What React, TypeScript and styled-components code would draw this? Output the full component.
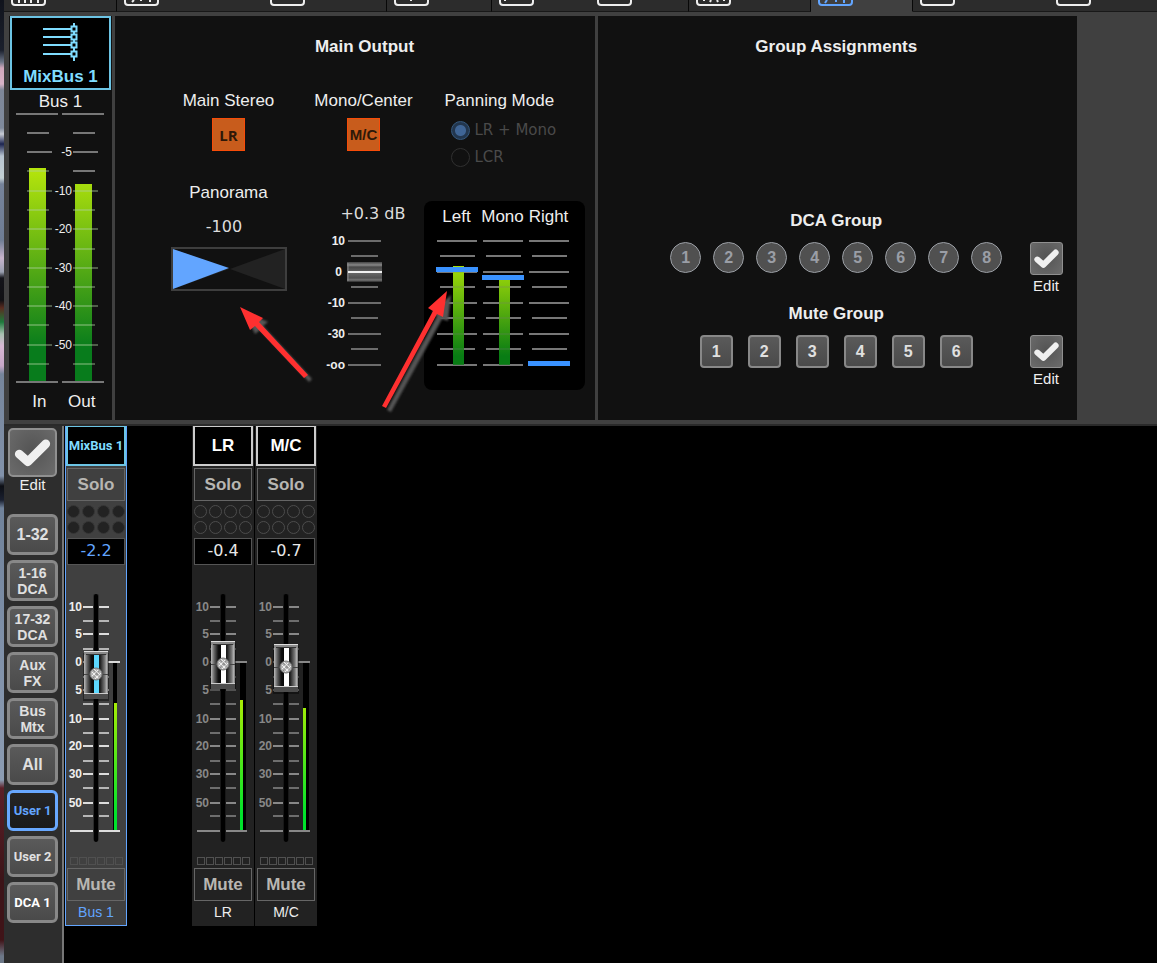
import React, { useState } from 'react';
import styled, { createGlobalStyle, css } from 'styled-components';

const sans = '"Liberation Sans", Arial, sans-serif';
const narrow = 'Roboto, "Liberation Sans", sans-serif';
const digits = '"DejaVu Sans", Verdana, sans-serif';

const GlobalStyle = createGlobalStyle`
  *, *::before, *::after { box-sizing: border-box; }
  body {
    margin: 0;
    background: #000;
    color: #eee;
    font-family: ${sans};
    font-size: 17px;
    line-height: 20px;
  }
  button { margin: 0; padding: 0; font-family: inherit; cursor: pointer; }
  svg { display: block; }
`;

/* ---------- page frame ---------- */

const Page = styled.div`
  display: flex;
  min-height: 100vh;
`;

const Wallpaper = styled.div`
  flex: 0 0 4px;
  background: linear-gradient(
    #10131c 0, #1a1f2c 50px, #6d7688 62px, #d0a8bc 68px, #d8b4c8 84px, #7e8798 90px,
    #7f8a9c 128px, #c8ccd4 134px, #1c2450 144px, #b8c4d0 156px, #c4d0d4 178px, #76839a 184px,
    #6f7d94 240px, #c8b4cc 258px, #9aa0b0 272px, #14141a 278px, #101014 300px, #5a2c20 308px,
    #1e7a3c 322px, #a8c0b0 334px, #d8b8d4 346px, #c8a8c8 366px, #76859b 374px, #8292aa 476px,
    #0c0e14 486px, #1a2030 500px, #70829a 508px, #7f90a8 640px, #8c9cb2 780px, #5c2028 788px,
    #3c1418 880px, #401418 940px, #6d7888 956px
  );
`;

const Main = styled.main`
  flex: 1;
  min-width: 0;
  display: flex;
  flex-direction: column;
`;

/* ---------- tab bar ---------- */

const TabBar = styled.nav`
  display: flex;
  height: 12px;
  overflow: hidden;
  background: #2c2c2c;
`;

const Tab = styled.button<{ $width: number; $active?: boolean; $divided?: boolean }>`
  flex: 0 0 ${p => p.$width}px;
  display: flex;
  padding: 0 0 0 7px;
  border: 0;
  border-right: ${p => (p.$divided ? '1px solid #080808' : '0')};
  border-bottom: 1px solid ${p => (p.$active ? '#404040' : '#181818')};
  background: ${p => (p.$active ? '#404040' : '#2c2c2c')};
  color: ${p => (p.$active ? '#62a5ff' : '#eee')};
`;

const TabRest = styled.div`
  flex: 1;
  border-bottom: 1px solid #181818;
`;

const tabs = [
  { name: 'Mixer', width: 113, divided: true, marks: 'M8 0V3M14 0V3M20 0V3M27 0V3' },
  { name: 'Channel', width: 146, marks: 'M10 0L8 2M17 0V1M26 0V2' },
  { name: 'Config', width: 124, divided: true, marks: '' },
  { name: 'Gate', width: 105, divided: true, marks: 'M17 0V1' },
  { name: 'Dyn', width: 98, marks: 'M6 0V1' },
  { name: 'EQ', width: 99, divided: true, marks: '' },
  { name: 'Sends', width: 122, divided: true, marks: 'M8 0V1M15 0L14 2M21 0L22 2M28 0V1' },
  { name: 'Main', width: 102, active: true, divided: true, marks: 'M9 0L7 3M18 0V2M26 0V3' },
  { name: 'Effects', width: 136, marks: '' },
  { name: 'Meters', width: 60, marks: '' },
];

/* ---------- upper panels ---------- */

const Panels = styled.section`
  display: grid;
  grid-template-columns: 103px minmax(450px, 1fr) minmax(450px, 1fr);
  gap: 3px;
  padding: 4px 80px 4px 5px;
  background: #404040;
  border-bottom: 2px solid #2a2a2a;
`;

const Panel = styled.div`
  min-height: 404px;
  background: #111;
`;

const BusButton = styled.button`
  display: flex;
  flex-direction: column;
  align-items: center;
  justify-content: space-between;
  width: 101px;
  height: 74px;
  margin: 0 1px;
  padding: 4px 0 1px;
  border: 2px solid #6cc4e4;
  background: #000;
  color: #7fdcff;
  font-size: 17px;
  font-weight: bold;
  line-height: 20px;
`;

const CenterText = styled.div`
  text-align: center;
  white-space: nowrap;
`;

const BusName = styled(CenterText)`
  padding-top: 2px;
`;

const MeterNames = styled.div`
  display: grid;
  grid-template-columns: 1fr 1fr;
  padding: 0 9px;
  text-align: center;
`;

const Heading = styled.h2`
  margin: 0;
  font-size: 17px;
  line-height: 20px;
  font-weight: bold;
  text-align: center;
`;

const OutputBody = styled.div`
  position: relative;
  width: 440px;
  min-height: 404px;
  margin: 0 10px 0 auto;
  padding-top: 21px;
`;

const OutputColumns = styled.div`
  display: grid;
  grid-template-columns: 168px 102px 161px;
  column-gap: 0;
  margin-top: 34px;
`;

const Column = styled.div`
  display: flex;
  flex-direction: column;
  align-items: center;
`;

const PanningColumn = styled(Column)`
  width: 161px;
  margin-left: 9px;
`;

const Assign = styled.button<{ $face?: string }>`
  width: 33px;
  height: 33px;
  margin-top: 7px;
  border: 1px solid #f84c08;
  background: #c85c1c;
  color: #2e1808;
  font-family: ${p => p.$face || sans};
  font-size: 15px;
  font-weight: bold;
`;

const Readout = styled.output<{ $top: number; $align?: string }>`
  display: block;
  width: 100%;
  margin-top: ${p => p.$top}px;
  padding-right: 9px;
  color: #ddd;
  font-family: ${digits};
  font-size: 16px;
  line-height: 20px;
  text-align: ${p => p.$align || 'center'};
  white-space: nowrap;
`;

const PanLabel = styled.label`
  margin-top: 32px;
`;

const SliderFrame = styled.div`
  position: relative;
`;

const PanFrame = styled(SliderFrame)`
  width: 116px;
  height: 44px;
  margin-top: 10px;
`;

const RangeInput = styled.input<{ $vertical?: boolean }>`
  position: absolute;
  inset: 0;
  width: 100%;
  height: 100%;
  margin: 0;
  opacity: 0;
  cursor: pointer;
  ${p => p.$vertical && css`writing-mode: vertical-lr; direction: rtl;`}
`;

const PanningMode = styled.fieldset`
  width: 100%;
  margin: 0;
  padding: 0 0 0 21px;
  border: 0;
  white-space: nowrap;
`;

const Legend = styled.legend`
  padding: 0;
  margin-bottom: 9px;
`;

const RadioRow = styled.label`
  display: flex;
  align-items: center;
  gap: 5px;
  height: 20px;
  margin: 0 0 7px 6px;
  color: #4a4a4a;
  font-family: ${digits};
  font-size: 15px;
`;

const Radio = styled.input`
  appearance: none;
  width: 19px;
  height: 19px;
  margin: 0;
  border: 1px solid #303030;
  border-radius: 50%;
  &:checked {
    border-color: #35597f;
    background: radial-gradient(circle, #3f6596 0 5px, #22364e 6px);
  }
`;

const MeterBox = styled.div`
  display: flex;
  gap: 4px;
  width: 161px;
  height: 189px;
  margin-top: 27px;
  padding: 6px 0 0 12px;
  border-radius: 8px;
  background: #000;
`;

const MeterColumn = styled.div`
  display: flex;
  flex-direction: column;
  align-items: center;
  width: 42px;
  white-space: nowrap;
`;

const Annotation = styled.svg`
  position: absolute;
  top: 0;
  left: 0;
  pointer-events: none;
`;

const GroupPanel = styled(Panel)`
  padding: 21px 2px 0 0;
`;

const GroupSections = styled.div`
  display: grid;
  gap: 10px;
  margin-top: 154px;
`;

const GroupRow = styled.div`
  display: grid;
  grid-template-columns: 58px 1fr 58px;
  align-items: start;
  margin-top: 11px;
`;

const GroupButtons = styled.div<{ $gap: number }>`
  grid-column: 2;
  display: flex;
  justify-content: center;
  gap: ${p => p.$gap}px;
`;

const DcaButton = styled.button`
  width: 31px;
  height: 31px;
  border: 1px solid #9a9ea4;
  border-radius: 50%;
  background: #505050;
  color: #9a9ea6;
  font-size: 16px;
  font-weight: bold;
`;

const raised = css`
  border: 2px solid #888;
  border-radius: 4px;
  background: linear-gradient(#5a5a5a, #4a4a4a);
  color: #e0e0e0;
  font-weight: bold;
`;

const MuteGroupButton = styled.button`
  ${raised}
  width: 33px;
  height: 33px;
  font-size: 16px;
`;

const EditBox = styled.div`
  display: flex;
  flex-direction: column;
  align-items: center;
  color: #eee;
  font-size: 15px;
  line-height: 16px;
`;

const EditButton = styled.button<{ $large?: boolean }>`
  width: ${p => (p.$large ? 49 : 33)}px;
  height: ${p => (p.$large ? 49 : 33)}px;
  margin-bottom: ${p => (p.$large ? 0 : 3)}px;
  border: ${p => (p.$large ? 2 : 1)}px solid #909090;
  border-radius: ${p => (p.$large ? 5 : 3)}px;
  background: radial-gradient(ellipse at 50% 45%, #545454, #6c6c6c);
`;

/* ---------- lower mixer ---------- */

const Mixer = styled.section`
  flex: 1;
  display: flex;
  background: #000;
`;

const Sidebar = styled.aside`
  flex: 0 0 60px;
  padding: 2px 0 0 3px;
  border-right: 2px solid #777;
  background: #2d2d2d;
`;

const SideEdit = styled(EditBox)`
  width: 51px;
`;

const BankList = styled.div`
  display: grid;
  gap: 5px;
  width: 51px;
  margin-top: 21px;
`;

const Bank = styled.button<{ $kind?: 'stacked' | 'user'; $active?: boolean; $bright?: boolean }>`
  ${raised}
  height: 41px;
  border-width: 3px;
  border-radius: 6px;
  font-family: ${p => (p.$kind === 'user' ? narrow : sans)};
  font-size: ${p => (p.$kind === 'user' ? 13 : p.$kind ? 14 : 16)}px;
  line-height: 16px;
  white-space: pre;
  ${p => p.$bright && css`color: #fff;`}
  ${p => p.$active && css`
    border-color: #68a8ff;
    background: linear-gradient(#262626, #1a1a1a);
    color: #62a5ff;
  `}
`;

const Strips = styled.div`
  display: flex;
  align-items: flex-start;
  padding-left: 1px;
`;

const Strip = styled.article<{ $selected?: boolean }>`
  width: 62px;
  height: 500px;
  margin-right: ${p => (p.$selected ? 65 : 1)}px;
  border: 1px solid ${p => (p.$selected ? '#62a5ff' : '#222')};
  border-top: 0;
  background: ${p => (p.$selected ? '#404040' : '#222')};
  display: flex;
  flex-direction: column;
  align-items: center;
`;

const StripHead = styled.button<{ $selected?: boolean }>`
  width: 60px;
  height: 40px;
  border: 2px solid ${p => (p.$selected ? '#6cc4e4' : '#ccc')};
  border-top-width: 1px;
  background: #000;
  color: ${p => (p.$selected ? '#7fdcff' : '#fff')};
  font-family: ${p => (p.$selected ? narrow : sans)};
  font-size: ${p => (p.$selected ? 13 : 17)}px;
  font-weight: bold;
  white-space: nowrap;
`;

const StripButton = styled.button`
  width: 58px;
  height: 33px;
  border: 1px solid #666;
  background: transparent;
  color: #b8b6b2;
  font-size: 17px;
  font-weight: bold;
`;

const SoloButton = styled(StripButton)`
  margin: 2px 0 4px;
`;

const Dots = styled.div`
  display: grid;
  grid-template-columns: repeat(4, 13px);
  gap: 3px 2px;
`;

const Dot = styled.span<{ $filled?: boolean }>`
  width: 13px;
  height: 13px;
  border: 1px solid ${p => (p.$filled ? '#363636' : '#4c4c4c')};
  border-radius: 50%;
  background: ${p => (p.$filled ? '#222' : 'transparent')};
`;

const Level = styled.output<{ $selected?: boolean }>`
  width: 58px;
  height: 27px;
  margin-top: 4px;
  border: 1px solid #555;
  background: #000;
  color: ${p => (p.$selected ? '#62a5ff' : '#e8e8e8')};
  font-family: ${digits};
  font-size: 16px;
  line-height: 24px;
  text-align: center;
`;

const FaderSlot = styled.div`
  height: 290px;
`;

const Squares = styled.div`
  display: grid;
  grid-template-columns: repeat(6, 8px);
  gap: 1px;
  margin: 2px 0 3px;
`;

const Square = styled.span`
  height: 8px;
  border: 1px solid #505050;
`;

const StripName = styled.div<{ $selected?: boolean }>`
  margin-top: 1px;
  color: ${p => (p.$selected ? '#62a5ff' : '#eee')};
  font-size: 14px;
`;

/* ---------- drawings ---------- */

const BusIcon = () => (
  <svg width="40" height="40" viewBox="0 0 40 40" fill="none" stroke="#7fdcff" strokeWidth="2" aria-hidden="true">
    <path d="M2 7H31M2 15H31M2 23H31M2 32H31" />
    <path d="M33 1V4M33 10V12M33 18V20M33 26V29M33 35V39" />
    <path d="M30.500 4.500h5v5h-5zM30.500 12.500h5v5h-5zM30.500 20.500h5v5h-5zM30.500 29.500h5v5h-5z" />
  </svg>
);

const Check = ({ size }: { size: number }) => (
  <svg width={size} height={size} viewBox="2 2 44 44" fill="none" aria-hidden="true">
    <path d="M11 25.500L19.500 33L37 15.500" stroke="#f0f0f0" strokeWidth="8.500" strokeLinecap="round" strokeLinejoin="round" />
  </svg>
);

const LevelGradient = ({ id, top, bottom, range }: { id: string; top: string; bottom: string; range: [number, number] }) => (
  <defs>
    <linearGradient id={id} gradientUnits="userSpaceOnUse" x1="0" x2="0" y1={range[0]} y2={range[1]}>
      <stop offset="0" stopColor={top} />
      <stop offset="1" stopColor={bottom} />
    </linearGradient>
  </defs>
);

const meterMarks = [0, 19, 38, 57, 77, 96, 115, 135, 154, 173, 192, 211, 231, 250, 268];

const BusMeters = () => (
  <svg width="103" height="280" viewBox="0 0 103 280" role="img" aria-label="Bus input and output level">
    <LevelGradient id="bus" top="#b4e40c" bottom="#087c1c" range={[57, 235]} />
    {[{ x: 7, level: 56 }, { x: 53, level: 72 }].map(m => (
      <g key={m.x} transform={`translate(${m.x} 1)`}>
        <rect x="13" y={m.level - 1} width="17" height={269 - m.level} fill="url(#bus)" />
        {meterMarks.map((y, i) => {
          const end = i === 0 || i === 14;
          const over = y > m.level && !end;
          return (
            <React.Fragment key={y}>
              <rect x={end ? 0 : 11} y={y} width={end ? 42 : i % 2 ? 22 : 25} height="2" fill="#777" opacity={over ? 0 : 1} />
              {over && <rect x="11" y={y} width={i % 2 ? 22 : 25} height="2" fill="#b0d0a0" opacity="0.4" />}
            </React.Fragment>
          );
        })}
      </g>
    ))}
    <g fill="#eee" fontFamily="Liberation Sans" fontSize="12" textAnchor="end">
      {['-5', '-10', '-20', '-30', '-40', '-50'].map((t, i) => (
        <text key={t} x="63" y={[44, 83, 121, 160, 198, 237][i]}>{t}</text>
      ))}
    </g>
  </svg>
);

const outputMarks = [16, 31, 47, 62, 78, 93, 109, 124, 140];

const OutputMeter = ({ name, level, peak }: { name: string; level?: number; peak: number }) => (
  <MeterColumn>
    {name}
    <svg width="42" height="150" viewBox="0 1 42 150" role="img" aria-label={`${name} level`}>
      <LevelGradient id="output" top="#a4dc08" bottom="#087c14" range={[40, 130]} />
      {level && <rect x="17" y={level} width="11" height={139 - level} fill="url(#output)" />}
      {outputMarks.map((y, i) => (
        <rect key={y} x={i % 2 ? 4 : 1} y={y - 2} width={i % 2 ? 35 : 40} height="2" fill="#777" />
      ))}
      {level && <rect x="17" y={level} width="11" height={139 - level} fill="url(#output)" opacity="0.8" />}
      <rect y={peak} width="42" height="5" fill="#3a92ff" />
    </svg>
  </MeterColumn>
);

const Panorama = () => {
  const [pan, setPan] = useState(-100);
  return (
    <>
      <PanLabel htmlFor="panorama">Panorama</PanLabel>
      <Readout $top={14}>{pan}</Readout>
      <PanFrame>
        <svg width="116" height="44" viewBox="0 0 116 44" aria-hidden="true">
          <rect x="1" y="1" width="114" height="42" fill="#111" stroke="#3e3e3e" strokeWidth="2" />
          <path d="M114 2V42L59 22Z" fill="#222" />
          <path d="M2 2V42L58 22Z" fill="#222" />
          {pan < 0 && <path d="M2 2V42L58 21Z" fill="#62a5ff" opacity={-pan / 100} />}
          {pan > 0 && <path d="M114 2V42L58 21Z" fill="#62a5ff" opacity={pan / 100} />}
        </svg>
        <RangeInput id="panorama" type="range" min={-100} max={100} value={pan} onChange={e => setPan(+e.target.value)} />
      </PanFrame>
    </>
  );
};

const MonoSlider = () => {
  const [pos, setPos] = useState(93);
  const y = 141 - pos;
  return (
    <SliderFrame>
      <svg width="102" height="150" viewBox="0 0 102 150" aria-hidden="true">
        <defs>
          <linearGradient id="cap" x1="0" x2="0" y1="0" y2="1">
            <stop offset="0" stopColor="#444" />
            <stop offset="0.15" stopColor="#888" />
            <stop offset="0.25" stopColor="#484848" />
            <stop offset="0.55" stopColor="#666" />
            <stop offset="0.8" stopColor="#505050" />
            <stop offset="0.9" stopColor="#777" />
            <stop offset="1" stopColor="#2a2a2a" />
          </linearGradient>
        </defs>
        {outputMarks.map((m, i) => (
          <rect key={m} x={i % 2 ? 38 : 35} y={m} width={i % 2 ? 27 : 33} height="2" fill="#6c6c6c" />
        ))}
        <g fill="#eee" fontFamily="Liberation Sans" fontSize="12" fontWeight="bold" textAnchor="end">
          {['10', '0', '-10', '-30', '-oo'].map((t, i) => (
            <text key={t} x={i === 1 ? 29 : 32} y={[21, 52, 83, 114, 145][i]}>{t}</text>
          ))}
        </g>
        <rect x="34" y={y - 10} width="35" height="20" fill="url(#cap)" />
        <path d={`M35 ${y - 9}V${y + 9}`} stroke="#888" />
        <rect x="35" y={y - 1} width="34" height="2" fill="#f0f0f0" />
      </svg>
      <RangeInput $vertical type="range" aria-label="Mono/Center level" min={0} max={125} value={pos} onChange={e => setPos(+e.target.value)} />
    </SliderFrame>
  );
};

const faderMarks = [12, 26, 39, 54, 67, 82, 95, 109, 124, 138, 151, 166, 179, 193, 208, 221];
const faderLabels: [string, number][] = [
  ['10', 12], ['5', 39], ['0', 67], ['5', 95], ['10', 124], ['20', 151], ['30', 179], ['50', 208],
];

const Fader = ({ name, start, level, selected }: { name: string; start: number; level: number; selected?: boolean }) => {
  const [pos, setPos] = useState(start);
  const y = 236 - pos;
  const mark = selected ? '#ddd' : '#888';
  const id = `fader-${name.replace(/\W/g, '')}`;
  return (
    <SliderFrame>
      <svg width="60" height="280" viewBox="0 0 60 280" aria-hidden="true">
        <LevelGradient id={id} top="#c0ee00" bottom="#00e42c" range={[120, 250]} />
        <defs>
          <linearGradient id={`${id}-body`} x1="0" x2="1" y1="0" y2="0">
            <stop offset="0" stopColor="#bbb" />
            <stop offset="0.13" stopColor="#666" />
            <stop offset="0.3" stopColor="#111" />
            <stop offset="0.5" stopColor="#000" />
            <stop offset="0.68" stopColor="#222" />
            <stop offset="0.86" stopColor="#777" />
            <stop offset="0.96" stopColor="#bbb" />
            <stop offset="1" stopColor="#555" />
          </linearGradient>
        </defs>
        <g fill={mark}>
          {faderMarks.map((m, i) => (
            <React.Fragment key={m}>
              <rect x="17" y={m + 29} width="10" height="2" opacity={i % 2 ? 0.75 : 1} />
              <rect x="33" y={m + 29} width="10" height="2" opacity={i % 2 ? 0.75 : 1} />
            </React.Fragment>
          ))}
          <rect x="33" y="96" width="21" height="2" />
          <rect x="4" y="265" width="50" height="2" />
        </g>
        <rect x="27" y="29" width="6" height="247" rx="2" fill={selected ? '#2c2c2c' : '#181818'} />
        <rect x="28" y="29" width="4" height="248" rx="2" fill="#000" />
        <rect x="47" y="98" width={selected ? 4 : 6} height="167" fill="#000" />
        <rect x={selected ? 48 : 47} y={level} width="3" height={265 - level} fill={`url(#${id})`} />
        <g fill={selected ? '#eee' : '#888'} fontFamily="Liberation Sans" fontSize="12" fontWeight="bold" textAnchor="end">
          {faderLabels.map(([t, m]) => (
            <text key={m} x="16" y={m + 34}>{t}</text>
          ))}
        </g>
        <g transform={`translate(18 ${y})`}>
          <rect x="-1" y="2" width="26" height="48" fill="#000" opacity="0.4" />
          <rect width="24" height="48" rx="1" fill={`url(#${id}-body)`} />
          <rect width="24" height="4" fill="#8a8a8a" />
          <rect width="24" height="1" fill="#ddd" />
          <rect x="2" y="3" width="20" height="1" fill="#333" />
          <rect y="43" width="24" height="5" fill="#4c4c4c" />
          <rect y="42" width="24" height="1" fill="#ccc" />
          <path d="M0 23.500H24" stroke="#444" />
          <rect x="10" y="4" width="5" height="38" fill={selected ? '#5cd8ff' : '#fff'} />
          <circle cx="12" cy="23" r="6" fill="#b4b4b4" stroke="#777" />
          <path d="M8 21L14 27M10 18L16 24M8 25L14 19M11 28L17 22" stroke="#eee" />
          <path d="M9 19L16 26M9 27L16 19" stroke="#777" strokeDasharray="1 1" />
        </g>
      </svg>
      <RangeInput $vertical type="range" aria-label={`${name} fader`} min={0} max={200} value={pos} onChange={e => setPos(+e.target.value)} />
    </SliderFrame>
  );
};

const Arrows = () => (
  <Annotation width="440" height="404" viewBox="0 0 440 404" aria-hidden="true">
    <defs>
      <filter id="soft" x="-20%" y="-20%" width="140%" height="140%">
        <feGaussianBlur stdDeviation="1" />
      </filter>
    </defs>
    <g fill="#555" filter="url(#soft)" transform="translate(4 4)">
      <path d="M95 291L119 302L114 306L163 359L160 362L111 310L106 314Z" />
      <path d="M302 275L299 301L293 299L242 392L238 390L288 296L283 292Z" />
    </g>
    <g fill="#ff3030">
      <path d="M95 291L118 302L114 306L163 359L159 362L110 310L105 314Z" />
      <path d="M302 275L298 301L292 298L241 392L237 390L288 295L283 292Z" />
    </g>
  </Annotation>
);

/* ---------- composed parts ---------- */

const Edit = ({ what, large }: { what: string; large?: boolean }) => (
  <>
    <EditButton $large={large} aria-label={`Edit ${what}`}>
      <Check size={large ? 45 : 31} />
    </EditButton>
    Edit
  </>
);

const ChannelStrip = ({ title, name, value, start, level, selected }: {
  title: string; name: string; value: string; start: number; level: number; selected?: boolean;
}) => (
  <Strip $selected={selected}>
    <StripHead $selected={selected}>{title}</StripHead>
    <SoloButton>Solo</SoloButton>
    <Dots>{Array.from({ length: 8 }, (_, i) => <Dot key={i} $filled={selected} />)}</Dots>
    <Level $selected={selected}>{value}</Level>
    <FaderSlot>
      <Fader name={title} start={start} level={level} selected={selected} />
    </FaderSlot>
    <Squares>{Array.from({ length: 6 }, (_, i) => <Square key={i} />)}</Squares>
    <StripButton>Mute</StripButton>
    <StripName $selected={selected}>{name}</StripName>
  </Strip>
);

const banks: { label: string; kind?: 'stacked' | 'user'; active?: boolean; bright?: boolean }[] = [
  { label: '1-32' },
  { label: '1-16\nDCA', kind: 'stacked' },
  { label: '17-32\nDCA', kind: 'stacked' },
  { label: 'Aux\nFX', kind: 'stacked' },
  { label: 'Bus\nMtx', kind: 'stacked' },
  { label: 'All' },
  { label: 'User 1', kind: 'user', active: true },
  { label: 'User 2', kind: 'user' },
  { label: 'DCA 1', kind: 'user', bright: true },
];

export default function App() {
  const [mode, setMode] = useState('lr');
  return (
    <>
      <GlobalStyle />
      <Page>
        <Wallpaper />
        <Main>
          <TabBar>
            {tabs.map(t => (
              <Tab key={t.name} $width={t.width} $active={t.active} $divided={t.divided} aria-label={t.name}>
                <svg width="35" height="7" viewBox="0 0 35 7" fill="none" stroke="currentColor" strokeWidth="2" aria-hidden="true">
                  <path d="M1 -4V2Q1 5 4 5H31Q34 5 34 2V-4" />
                  <path d={t.marks} />
                </svg>
              </Tab>
            ))}
            <TabRest />
          </TabBar>

          <Panels>
            <Panel>
              <BusButton>
                <BusIcon />
                MixBus 1
              </BusButton>
              <BusName>Bus 1</BusName>
              <BusMeters />
              <MeterNames>
                <span>In</span>
                <span>Out</span>
              </MeterNames>
            </Panel>

            <Panel>
              <OutputBody>
                <Heading>Main Output</Heading>
                <OutputColumns>
                  <Column>
                    Main Stereo
                    <Assign $face={'"Open Sans", sans-serif'}>LR</Assign>
                    <Panorama />
                  </Column>
                  <Column>
                    <CenterText>Mono/Center</CenterText>
                    <Assign>M/C</Assign>
                    <Readout $top={53} $align="right">+0.3 dB</Readout>
                    <MonoSlider />
                  </Column>
                  <PanningColumn>
                    <PanningMode>
                      <Legend>Panning Mode</Legend>
                      <RadioRow>
                        <Radio type="radio" name="mode" checked={mode === 'lr'} onChange={() => setMode('lr')} />
                        LR + Mono
                      </RadioRow>
                      <RadioRow>
                        <Radio type="radio" name="mode" checked={mode === 'lcr'} onChange={() => setMode('lcr')} />
                        LCR
                      </RadioRow>
                    </PanningMode>
                    <MeterBox>
                      <OutputMeter name="Left" level={40} peak={41} />
                      <OutputMeter name="Mono" level={50} peak={49} />
                      <OutputMeter name="Right" peak={135} />
                    </MeterBox>
                  </PanningColumn>
                </OutputColumns>
                <Arrows />
              </OutputBody>
            </Panel>

            <GroupPanel>
              <Heading>Group Assignments</Heading>
              <GroupSections>
                <div>
                  <Heading as="h3">DCA Group</Heading>
                  <GroupRow>
                    <GroupButtons $gap={12}>
                      {[1, 2, 3, 4, 5, 6, 7, 8].map(n => <DcaButton key={n}>{n}</DcaButton>)}
                    </GroupButtons>
                    <EditBox><Edit what="DCA groups" /></EditBox>
                  </GroupRow>
                </div>
                <div>
                  <Heading as="h3">Mute Group</Heading>
                  <GroupRow>
                    <GroupButtons $gap={15}>
                      {[1, 2, 3, 4, 5, 6].map(n => <MuteGroupButton key={n}>{n}</MuteGroupButton>)}
                    </GroupButtons>
                    <EditBox><Edit what="mute groups" /></EditBox>
                  </GroupRow>
                </div>
              </GroupSections>
            </GroupPanel>
          </Panels>

          <Mixer>
            <Sidebar>
              <SideEdit><Edit what="banks" large /></SideEdit>
              <BankList>
                {banks.map(b => (
                  <Bank key={b.label} $kind={b.kind} $active={b.active} $bright={b.bright}>{b.label}</Bank>
                ))}
              </BankList>
            </Sidebar>
            <Strips>
              <ChannelStrip title="MixBus 1" name="Bus 1" value="-2.2" start={150} level={138} selected />
              <ChannelStrip title="LR" name="LR" value="-0.4" start={160} level={135} />
              <ChannelStrip title="M/C" name="M/C" value="-0.7" start={157} level={143} />
            </Strips>
          </Mixer>
        </Main>
      </Page>
    </>
  );
}
